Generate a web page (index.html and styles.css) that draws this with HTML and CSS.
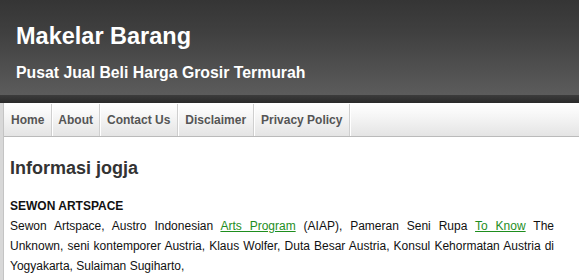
FILE: index.html
```html
<!DOCTYPE html>
<html>
<head>
  <title>Makelar Barang</title>
  <link rel="stylesheet" href="styles.css">
</head>
<body>
  <div class="header">
    <h1>Makelar Barang</h1>
    <p class="tagline">Pusat Jual Beli Harga Grosir Termurah</p>
  </div>
  <div class="header-band"></div>

  <div class="wrapper">
    <ul class="nav">
      <li><a href="#">Home</a></li>
      <li><a href="#">About</a></li>
      <li><a href="#">Contact Us</a></li>
      <li><a href="#">Disclaimer</a></li>
      <li><a href="#">Privacy Policy</a></li>
    </ul>

    <div class="content">
      <h2>Informasi jogja</h2>
      <p class="post">
        <strong>SEWON ARTSPACE</strong><br>
        Sewon Artspace, Austro Indonesian <a href="#">Arts Program</a> (AIAP), Pameran Seni Rupa <a href="#">To Know</a> The Unknown, seni kontemporer Austria, Klaus Wolfer, Duta Besar Austria, Konsul Kehormatan Austria di Yogyakarta, Sulaiman Sugiharto,
      </p>
    </div>
  </div>
</body>
</html>
```

FILE: styles.css
```css
body {
  margin: 0;
  background: #d8d8d8;
  font-family: "Liberation Sans", Arial, sans-serif;
}

.header {
  height: 95px;
  padding: 0 16px;
  box-sizing: border-box;
  background: linear-gradient(to bottom, #353535 0%, #404040 35%, #5c5c5c 100%);
  color: #fff;
  overflow: hidden;
}

.header h1 {
  margin: 0;
  padding-top: 22px;
  font-size: 23.5px;
  line-height: 28px;
  font-weight: bold;
}

.header .tagline {
  margin: 14px 0 0;
  font-size: 15.8px;
  line-height: 18px;
  font-weight: bold;
}

.header-band {
  height: 8px;
  background: linear-gradient(to bottom, #3c3c3c, #2a2a2a);
}

.wrapper {
  margin-left: 3px;
  border-left: 1px solid #c4c4c4;
  background: #fff;
  min-height: 200px;
}

.nav {
  list-style: none;
  margin: 0;
  padding: 0;
  display: flex;
  height: 32px;
  border-top: 1px solid #fff;
  border-bottom: 1px solid #bababa;
  background: linear-gradient(to bottom, #fff 0%, #f5f5f5 40%, #e4e4e4 100%);
}

.nav li {
  border-right: 1px solid #cfcfcf;
  box-shadow: 1px 0 0 #fff;
}

.nav a {
  display: block;
  padding: 0 7px;
  line-height: 33px;
  font-size: 12px;
  font-weight: bold;
  color: #555;
  text-decoration: none;
}

.nav li:nth-child(2) a {
  padding: 0 6px;
}

.content {
  padding: 18px 25px 0 6px;
}

.content h2 {
  margin: 0;
  font-size: 18px;
  line-height: 26px;
  color: #333;
}

.post {
  margin: 15px 0 0;
  font-size: 12px;
  line-height: 20px;
  color: #111;
  text-align: justify;
}

.post a {
  color: #1e8e1e;
  text-decoration: underline;
}
```
